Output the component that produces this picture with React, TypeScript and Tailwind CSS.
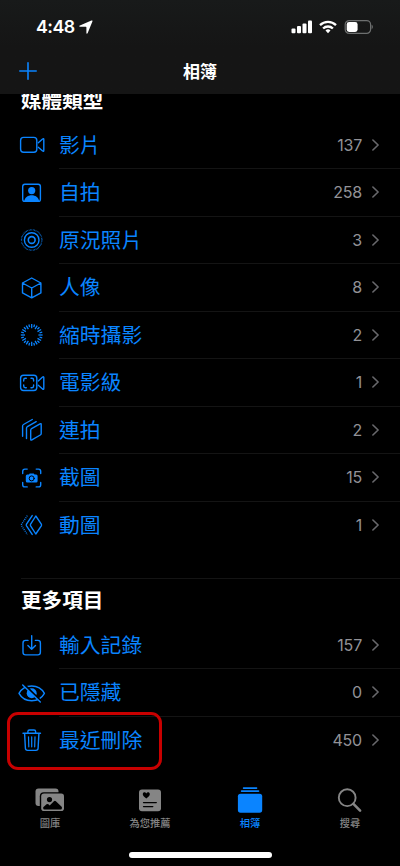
import React from 'react';

interface Row {
  label: string;
  count: number;
  icon: React.ReactNode;
  highlighted?: boolean;
}

const Glyph: React.FC<{ children: React.ReactNode }> = ({ children }) => (
  <svg
    viewBox="0 0 28 28"
    className="h-7 w-7 shrink-0"
    fill="none"
    stroke="currentColor"
    strokeWidth={1.4}
    strokeLinecap="round"
    strokeLinejoin="round"
  >
    {children}
  </svg>
);

const TICKS = Array.from({ length: 24 }, (_, i) => i * 15);

const MEDIA_TYPES: Row[] = [
  {
    label: '影片',
    count: 137,
    icon: (
      <Glyph>
        <rect x="2.6" y="6.4" width="16.2" height="14.8" rx="3" />
        <path d="M20.3 11.8l4.3-3.8q1.2-.8 1.2.5v11q0 1.3-1.2.5l-4.3-3.8" />
      </Glyph>
    ),
  },
  {
    label: '自拍',
    count: 258,
    icon: (
      <Glyph>
        <rect x="4.7" y="5.2" width="17.7" height="17.2" rx="2.2" />
        <circle cx="13.7" cy="11.6" r="3.6" fill="currentColor" stroke="none" />
        <path d="M6.2 22c.8-3.6 3.8-5.7 7.5-5.7s6.7 2.1 7.5 5.7z" fill="currentColor" stroke="none" />
      </Glyph>
    ),
  },
  {
    label: '原況照片',
    count: 3,
    icon: (
      <Glyph>
        <circle cx="13.7" cy="14" r="10.2" strokeWidth="1.2" strokeDasharray="0.6 0.8" strokeLinecap="butt" />
        <circle cx="13.7" cy="14" r="7.3" />
        <circle cx="13.7" cy="14" r="3.4" strokeWidth="1.6" />
      </Glyph>
    ),
  },
  {
    label: '人像',
    count: 8,
    icon: (
      <Glyph>
        <path d="M13.7 4l9.2 5v9.9l-9.2 5-9.2-5V9zM4.500 9l9.200 5 9.200-5M13.700 14v9.900" />
      </Glyph>
    ),
  },
  {
    label: '縮時攝影',
    count: 2,
    icon: (
      <Glyph>
        {TICKS.map((deg, i) => (
          <path
            key={deg}
            d={i % 2 ? 'M13.7 3.1v2.8' : 'M13.7 3.1v4.2'}
            transform={`rotate(${deg} 13.7 14)`}
            strokeWidth="1.3"
            strokeLinecap="butt"
          />
        ))}
      </Glyph>
    ),
  },
  {
    label: '電影級',
    count: 1,
    icon: (
      <Glyph>
        <rect x="2.6" y="6.3" width="16.2" height="15.2" rx="3" />
        <path d="M20.3 11.9l4.3-3.8q1.2-.8 1.2.5v11q0 1.3-1.2.5l-4.3-3.8" />
        <path d="M5.7 12v-1.1q0-1.6 1.6-1.6h1M13 9.3h1q1.6 0 1.6 1.6V12M15.6 16v1.1q0 1.6-1.6 1.6h-1M8.3 18.7h-1q-1.6 0-1.6-1.6V16" />
      </Glyph>
    ),
  },
  {
    label: '連拍',
    count: 2,
    icon: (
      <Glyph>
        <path d="M12.7 14.2q0-1 .9-1.5l8.4-4.9q1.2-.6 1.2.7v9q0 1-.9 1.5l-8.4 4.9q-1.2.6-1.2-.7z" />
        <path d="M8.5 22.5V12.2q0-1 .9-1.5l8.8-5M4.6 20.3V10q0-1 .9-1.5l8.8-5" />
      </Glyph>
    ),
  },
  {
    label: '截圖',
    count: 15,
    icon: (
      <Glyph>
        <path d="M4.7 9.5V7.3q0-2.2 2.2-2.2h2.3M18.2 5.1h2.3q2.2 0 2.2 2.2v2.2M22.7 18.5v2.2q0 2.2-2.2 2.2h-2.3M9.2 22.9H6.9q-2.2 0-2.2-2.2v-2.2" />
        <path
          d="M9.3 10.6h1.6l.8-1.200h4l.8 1.200h1.600q1.500 0 1.500 1.500v5q0 1.500-1.500 1.500H9.300q-1.500 0-1.500-1.500v-5q0-1.500 1.500-1.500z"
          fill="currentColor"
          stroke="none"
        />
        <circle cx="13.7" cy="14.4" r="2.5" stroke="#000" strokeWidth="1" />
      </Glyph>
    ),
  },
  {
    label: '動圖',
    count: 1,
    icon: (
      <Glyph>
        <path d="M17.8 5l5.5 8.2q.5.8 0 1.6L17.8 23l-5.2-8.2q-.5-.8 0-1.6z" />
        <path d="M14.2 4.6l-5.7 8.6q-.5.8 0 1.6l5.7 8.6" />
        <path d="M9.3 4.6l-5.7 8.6q-.5.8 0 1.6l5.7 8.6" strokeWidth="1.3" strokeDasharray="1 1" strokeLinecap="butt" />
      </Glyph>
    ),
  },
];

const UTILITIES: Row[] = [
  {
    label: '輸入記錄',
    count: 157,
    icon: (
      <Glyph>
        <path d="M10 9.4H7.6q-2.6 0-2.6 2.6v9.3q0 2.6 2.6 2.6h12.2q2.6 0 2.6-2.6V12q0-2.6-2.6-2.6h-2.4" />
        <path d="M13.7 4.6v13.2M9.9 14.4l3.8 3.8 3.8-3.8" />
      </Glyph>
    ),
  },
  {
    label: '已隱藏',
    count: 0,
    icon: (
      <Glyph>
        <path d="M1 14.4C3.3 10.2 8 7 13.7 7s10.4 3.2 12.7 7.4c-2.3 4.2-7 7.4-12.7 7.4S3.3 18.6 1 14.4z" />
        <circle cx="13.7" cy="14.3" r="5" fill="currentColor" stroke="none" />
        <path d="M5.7 5l17.4 17.2" stroke="#000" strokeWidth="2" />
        <path d="M4.7 5.9l17.6 17.2" />
      </Glyph>
    ),
  },
  {
    label: '最近刪除',
    count: 450,
    highlighted: true,
    icon: (
      <Glyph>
        <path d="M5 7.3h17.5M9.9 7V5.6q0-1.6 1.6-1.6h4.5q1.6 0 1.6 1.6V7M6.6 7.6l.8 14.7q.1 2.1 2.2 2.1h8.3q2.1 0 2.2-2.1l.8-14.7" />
        <path d="M10.5 10.8l.3 10M13.7 10.8v10M17 10.8l-.3 10" strokeWidth="1.2" />
      </Glyph>
    ),
  },
];

const AlbumRow: React.FC<{ row: Row; last: boolean }> = ({ row, last }) => (
  <li className="relative flex h-[47.5px] pl-[18px]">
    <div className="flex w-[41px] items-center text-[#0a84ff]">{row.icon}</div>
    <div className={`flex flex-1 items-center border-b pr-5 ${last ? 'border-transparent' : 'border-[#141414]'}`}>
      <span className="pt-[3px] text-[20.8px] leading-none text-[#0a84ff]">{row.label}</span>
      <span className="ml-auto font-[Inter] text-[16px] leading-none tracking-[-0.2px] text-[#929297]">{row.count}</span>
      <svg viewBox="0 0 8 14" className="ml-[10px] h-3.5 w-2" fill="none" stroke="#68686c" strokeWidth={1.6}>
        <path d="M.9 2L6.100 7 .9 12" strokeLinecap="round" strokeLinejoin="round" />
      </svg>
    </div>
    {row.highlighted && (
      <div className="absolute -top-[5px] left-[7px] h-[58px] w-[155px] rounded-[11px] border-[3px] border-[#c80000]" />
    )}
  </li>
);

const AlbumList: React.FC<{ rows: Row[] }> = ({ rows }) => (
  <ul>
    {rows.map((row, i) => (
      <AlbumRow key={row.label} row={row} last={i === rows.length - 1} />
    ))}
  </ul>
);

const StatusBar = () => (
  <div className="flex h-[54px] items-center pl-9 pr-[27px] text-white">
    <span className="w-[39px] font-[Inter] text-[17.8px] font-semibold leading-none tracking-[-0.5px]">4:48</span>
    <svg viewBox="0 0 14 14" className="ml-1 h-3.5 w-3.5" fill="#fff">
      <path d="M12.4.6q1.5-.6 1 .8L8.7 13q-.8 1.6-1.3-.1V7.3q0-.6-.6-.6H1.1Q-.6 6.3.9 5.5z" />
    </svg>
    <svg viewBox="0 0 22 14" className="ml-auto h-3.5 w-[22px]" fill="#fff">
      <rect x="0.5" y="8.5" width="4" height="4.8" rx="1" />
      <rect x="6" y="6" width="4" height="7.3" rx="1" />
      <rect x="11.5" y="3.4" width="4" height="9.9" rx="1" />
      <rect x="17" y="0.6" width="4" height="12.7" rx="1" />
    </svg>
    <svg viewBox="0 0 18 14" className="ml-[6px] h-3.5 w-[18px]" fill="none" stroke="#fff" strokeWidth={2.3}>
      <path d="M1 5.2a11.5 11.5 0 0 1 16 0M4.1 8.5a7 7 0 0 1 9.8 0" />
      <path d="M9 13.2l-2.5-2.7a3.6 3.6 0 0 1 5 0z" fill="#fff" stroke="none" />
    </svg>
    <svg viewBox="0 0 29 14" className="ml-[7px] h-3.5 w-[29px]" fill="none">
      <rect x="1.2" y="0.6" width="25.4" height="12.8" rx="4" stroke="#6d6f6f" strokeWidth="1.2" />
      <rect x="2.7" y="2.1" width="10.9" height="9.8" rx="2.4" fill="#fff" />
      <path d="M27.6 4.8q1.3.6 1.3 2.2t-1.3 2.2z" fill="#6d6f6f" />
    </svg>
  </div>
);

const TABS = [
  {
    label: '圖庫',
    icon: (
      <>
        <rect x="1.5" y="1.5" width="23" height="17.5" rx="3" />
        <rect x="5.8" y="5.2" width="25.5" height="20" rx="4" fill="#000" />
        <rect x="7.2" y="6.6" width="22.8" height="17.4" rx="2.8" />
        <circle cx="15.5" cy="12.6" r="2.6" fill="#000" />
        <path d="M9.2 20.2l3.3-2.9q1-.8 1.9 0l1.3 1.2 4.2-4.2q1-.9 2 0l6 5.6v1.3q0 1.2-1.2 1.2H10.4q-1.2 0-1.2-1.2z" fill="#000" />
      </>
    ),
  },
  {
    label: '為您推薦',
    icon: (
      <>
        <rect x="5" y="2.5" width="22" height="21.8" rx="3" />
        <path d="M12.3 11.5c-2.3-1.7-3.5-2.9-3.5-4.3 0-2 2.5-2.5 3.5-.8 1-1.7 3.5-1.2 3.5.8 0 1.4-1.2 2.6-3.5 4.3z" fill="#000" />
        <path d="M9.5 15.6h12.8M9.5 19.6h9.3" stroke="#000" strokeWidth="1.3" strokeLinecap="round" />
      </>
    ),
  },
  {
    label: '相簿',
    active: true,
    icon: (
      <>
        <rect x="8.8" y="0.2" width="14.5" height="1.7" rx="0.7" />
        <rect x="6.8" y="3.2" width="18.5" height="1.9" rx="0.8" />
        <rect x="3.9" y="6.7" width="24.3" height="19" rx="2.6" />
      </>
    ),
  },
  {
    label: '搜尋',
    icon: (
      <>
        <circle cx="13.2" cy="10.7" r="8.4" fill="none" stroke="currentColor" strokeWidth="1.9" />
        <path d="M19.4 16.9l6.7 6.7" stroke="currentColor" strokeWidth="2.6" strokeLinecap="round" />
      </>
    ),
  },
];

export default function App() {
  return (
    <div className="flex h-[866px] w-[400px] flex-col overflow-hidden bg-black font-['Liberation_Sans','Noto_Sans_CJK_TC',sans-serif]">
      <header className="relative z-10 h-[94px] shrink-0 bg-linear-to-b from-[#181a1a] via-[#151515] to-[#151515]">
        <StatusBar />
        <div className="grid grid-cols-3 items-start px-[19px] pt-[8px]">
          <svg viewBox="0 0 18 18" className="h-[18px] w-[18px]" stroke="#0a84ff" strokeWidth={1.6} strokeLinecap="round">
            <path d="M9 .8v16.4M.8 9h16.4" />
          </svg>
          <h1 className="pt-[2px] text-center text-[17px] font-bold leading-[18px] text-white">相簿</h1>
        </div>
      </header>

      <main className="-mt-[6px] flex-1">
        <h2 className="h-[33.5px] pl-[21px] text-[20.6px] font-bold leading-[25px] text-white">媒體類型</h2>
        <AlbumList rows={MEDIA_TYPES} />
        <section className="mt-[29px]">
          <h2 className="ml-[21px] h-[43.5px] border-t border-[#141414] text-[20.6px] font-bold leading-[44px] text-white">更多項目</h2>
          <AlbumList rows={UTILITIES} />
        </section>
      </main>

      <nav className="flex h-[80px] shrink-0 flex-col pt-px">
        <div className="grid grid-cols-4">
          {TABS.map((tab) => (
            <button
              key={tab.label}
              className={`flex flex-col items-center gap-1 ${tab.active ? 'text-[#0a84ff]' : 'text-[#858585]'}`}
            >
              <svg viewBox="0 0 32 27" className="h-[27px] w-8" fill="currentColor">
                {tab.icon}
              </svg>
              <span className="text-[10.3px] font-medium leading-3">{tab.label}</span>
            </button>
          ))}
        </div>
        <div className="mx-auto mb-2 mt-auto h-[6px] w-[143px] rounded-full bg-white" />
      </nav>
    </div>
  );
}
